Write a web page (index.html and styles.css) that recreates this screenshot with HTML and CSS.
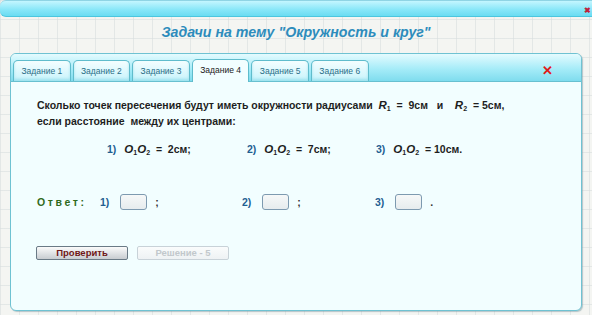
FILE: index.html
```html
<!DOCTYPE html>
<html lang="ru">
<head>
  <meta charset="UTF-8" />
  <title>Задачи на тему "Окружность и круг"</title>
  <link rel="stylesheet" href="styles.css">
</head>
<body>
  <div class="topbar">
    <span class="top-close">&#10006;</span>
  </div>

  <h1 class="title">Задачи на тему "Окружность и круг"</h1>

  <div class="panel">
    <div class="tabbar">
      <div class="tab">Задание 1</div>
      <div class="tab">Задание 2</div>
      <div class="tab">Задание 3</div>
      <div class="tab active">Задание 4</div>
      <div class="tab">Задание 5</div>
      <div class="tab">Задание 6</div>
      <span class="panel-close">&#10005;</span>
    </div>

    <div class="content">
      <p class="question">
        Сколько точек пересечения будут иметь окружности радиусами&nbsp;
        <span class="var">R<sub>1</sub></span>&nbsp;&nbsp;=&nbsp;&nbsp;9см&nbsp;&nbsp;&nbsp;и&nbsp;&nbsp;&nbsp;&nbsp;<span class="var">R<sub>2</sub></span>&nbsp;&nbsp;= 5см,<br>
        если расстояние &nbsp;между их центрами:
      </p>

      <div class="options">
        <div class="option"><span class="num">1)</span><span class="var">O<sub>1</sub>O<sub>2</sub></span>&nbsp;&nbsp;=&nbsp;&nbsp;2см;</div>
        <div class="option"><span class="num">2)</span><span class="var">O<sub>1</sub>O<sub>2</sub></span>&nbsp;&nbsp;=&nbsp;&nbsp;7см;</div>
        <div class="option"><span class="num">3)</span><span class="var">O<sub>1</sub>O<sub>2</sub></span>&nbsp;&nbsp;= 10см.</div>
      </div>

      <div class="answer">
        <span class="answer-label">Ответ:</span>
        <div class="slot"><span class="num">1)</span><input type="text" class="box"><span class="sep">;</span></div>
        <div class="slot"><span class="num">2)</span><input type="text" class="box"><span class="sep">;</span></div>
        <div class="slot"><span class="num">3)</span><input type="text" class="box"><span class="sep">.</span></div>
      </div>

      <div class="buttons">
        <button class="btn">Проверить</button>
        <button class="btn" disabled>Решение - 5</button>
      </div>
    </div>
  </div>
</body>
</html>
```

FILE: styles.css
```css
body {
  margin: 0;
  font-family: "Liberation Sans", Arial, sans-serif;
  background-color: #f4f5f2;
  background-image:
    linear-gradient(90deg, rgba(215, 222, 222, 0.6) 1px, transparent 1px),
    linear-gradient(rgba(215, 222, 222, 0.6) 1px, transparent 1px);
  background-size: 19px 19px;
  height: 315px;
  overflow: hidden;
}

/* top window bar */
.topbar {
  height: 15px;
  border-top: 1px solid #8fd4e4;
  border-bottom: 1px solid #4cc6de;
  border-radius: 6px 0 0 6px;
  background: linear-gradient(#c4f6ff, #86e6f8 60%, #6adcf2);
  display: flex;
  justify-content: flex-end;
  align-items: center;
}

.top-close {
  color: #c0203a;
  font-size: 8px;
  font-weight: bold;
  margin-right: 1px;
  margin-top: 3px;
}

.title {
  margin: 0;
  height: 36px;
  line-height: 30px;
  text-align: center;
  font-size: 14.2px;
  font-style: italic;
  font-weight: bold;
  color: #2d8cbc;
}

/* main panel */
.panel {
  margin: 0 10px 0 10px;
  height: 256px;
  border: 1px solid #6fc2d2;
  border-radius: 6px;
  background: #f2feff;
  box-shadow: 1px 1px 1px rgba(120, 150, 160, 0.5);
  overflow: hidden;
}

.tabbar {
  height: 24px;
  padding: 3px 3px 0 2px;
  display: flex;
  align-items: flex-end;
  gap: 2px;
  background: linear-gradient(#e4fbff, #a6ecf8 55%, #7fdcee);
  border-bottom: 1px solid #68c0d0;
}

.tab {
  width: 55.6px;
  height: 20px;
  border: 1px solid #5fbccc;
  border-bottom: none;
  border-radius: 5px 5px 0 0;
  background: linear-gradient(#f4feff, #c8f3fb);
  font-size: 8.5px;
  color: #2a6f88;
  text-align: center;
  line-height: 20px;
  box-shadow: inset 0 -2px 3px rgba(90, 200, 220, 0.4);
}

.tab.active {
  height: 22px;
  margin-bottom: -1px;
  background: #f2feff;
  color: #222;
  box-shadow: none;
}

.panel-close {
  margin-left: auto;
  margin-right: 25px;
  align-self: center;
  color: #e01818;
  font-size: 13px;
  font-weight: bold;
  margin-top: 2px;
}

.content {
  padding: 15px 0 0 26px;
  color: #1e1e1e;
}

.question {
  margin: 0;
  font-size: 10.5px;
  font-weight: bold;
  line-height: 16px;
}

.var {
  font-style: italic;
  font-size: 11.5px;
  font-weight: bold;
  line-height: 16px;
}

.var sub {
  font-size: 7px;
  font-style: normal;
  line-height: 0;
  vertical-align: -2px;
}

.options {
  display: flex;
  margin: 12px 0 0 70px;
  font-size: 10.5px;
  font-weight: bold;
  line-height: 16px;
}

.option {
  width: 140px;
}

.option:nth-child(2) {
  width: 129px;
}

.num {
  color: #1f5f92;
  font-weight: bold;
  font-size: 10.5px;
  margin-right: 8px;
}

.answer {
  display: flex;
  align-items: center;
  height: 16px;
  margin-top: 37px;
  font-size: 10.5px;
  font-weight: bold;
}

.answer-label {
  color: #2f6a1c;
  letter-spacing: 2.6px;
  width: 63px;
}

.slot {
  display: flex;
  align-items: center;
  width: 142px;
}

.slot:nth-child(3) {
  width: 133px;
}

.slot .num {
  margin-right: 11px;
}

.box {
  width: 25px;
  height: 14px;
  padding: 0;
  border: 1px solid #7d9ab0;
  border-radius: 3px;
  background: linear-gradient(#f6f8f8, #e6ecee);
  margin: 0;
}

.sep {
  margin-left: 8px;
  color: #333;
}

.buttons {
  display: flex;
  gap: 9px;
  margin-top: 36px;
  margin-left: -1px;
}

.btn {
  width: 92px;
  height: 14px;
  padding: 0;
  font-family: inherit;
  font-size: 9.5px;
  font-weight: bold;
  color: #701818;
  border: 1px solid #6a7a86;
  border-radius: 2px;
  background: linear-gradient(#fbfbfb, #dcdfe2 60%, #c8ccd0);
  line-height: 12px;
}

.btn:disabled {
  color: #c2c8cc;
  border-color: #c8d2d8;
  background: linear-gradient(#fafcfc, #eef2f4);
}
```
